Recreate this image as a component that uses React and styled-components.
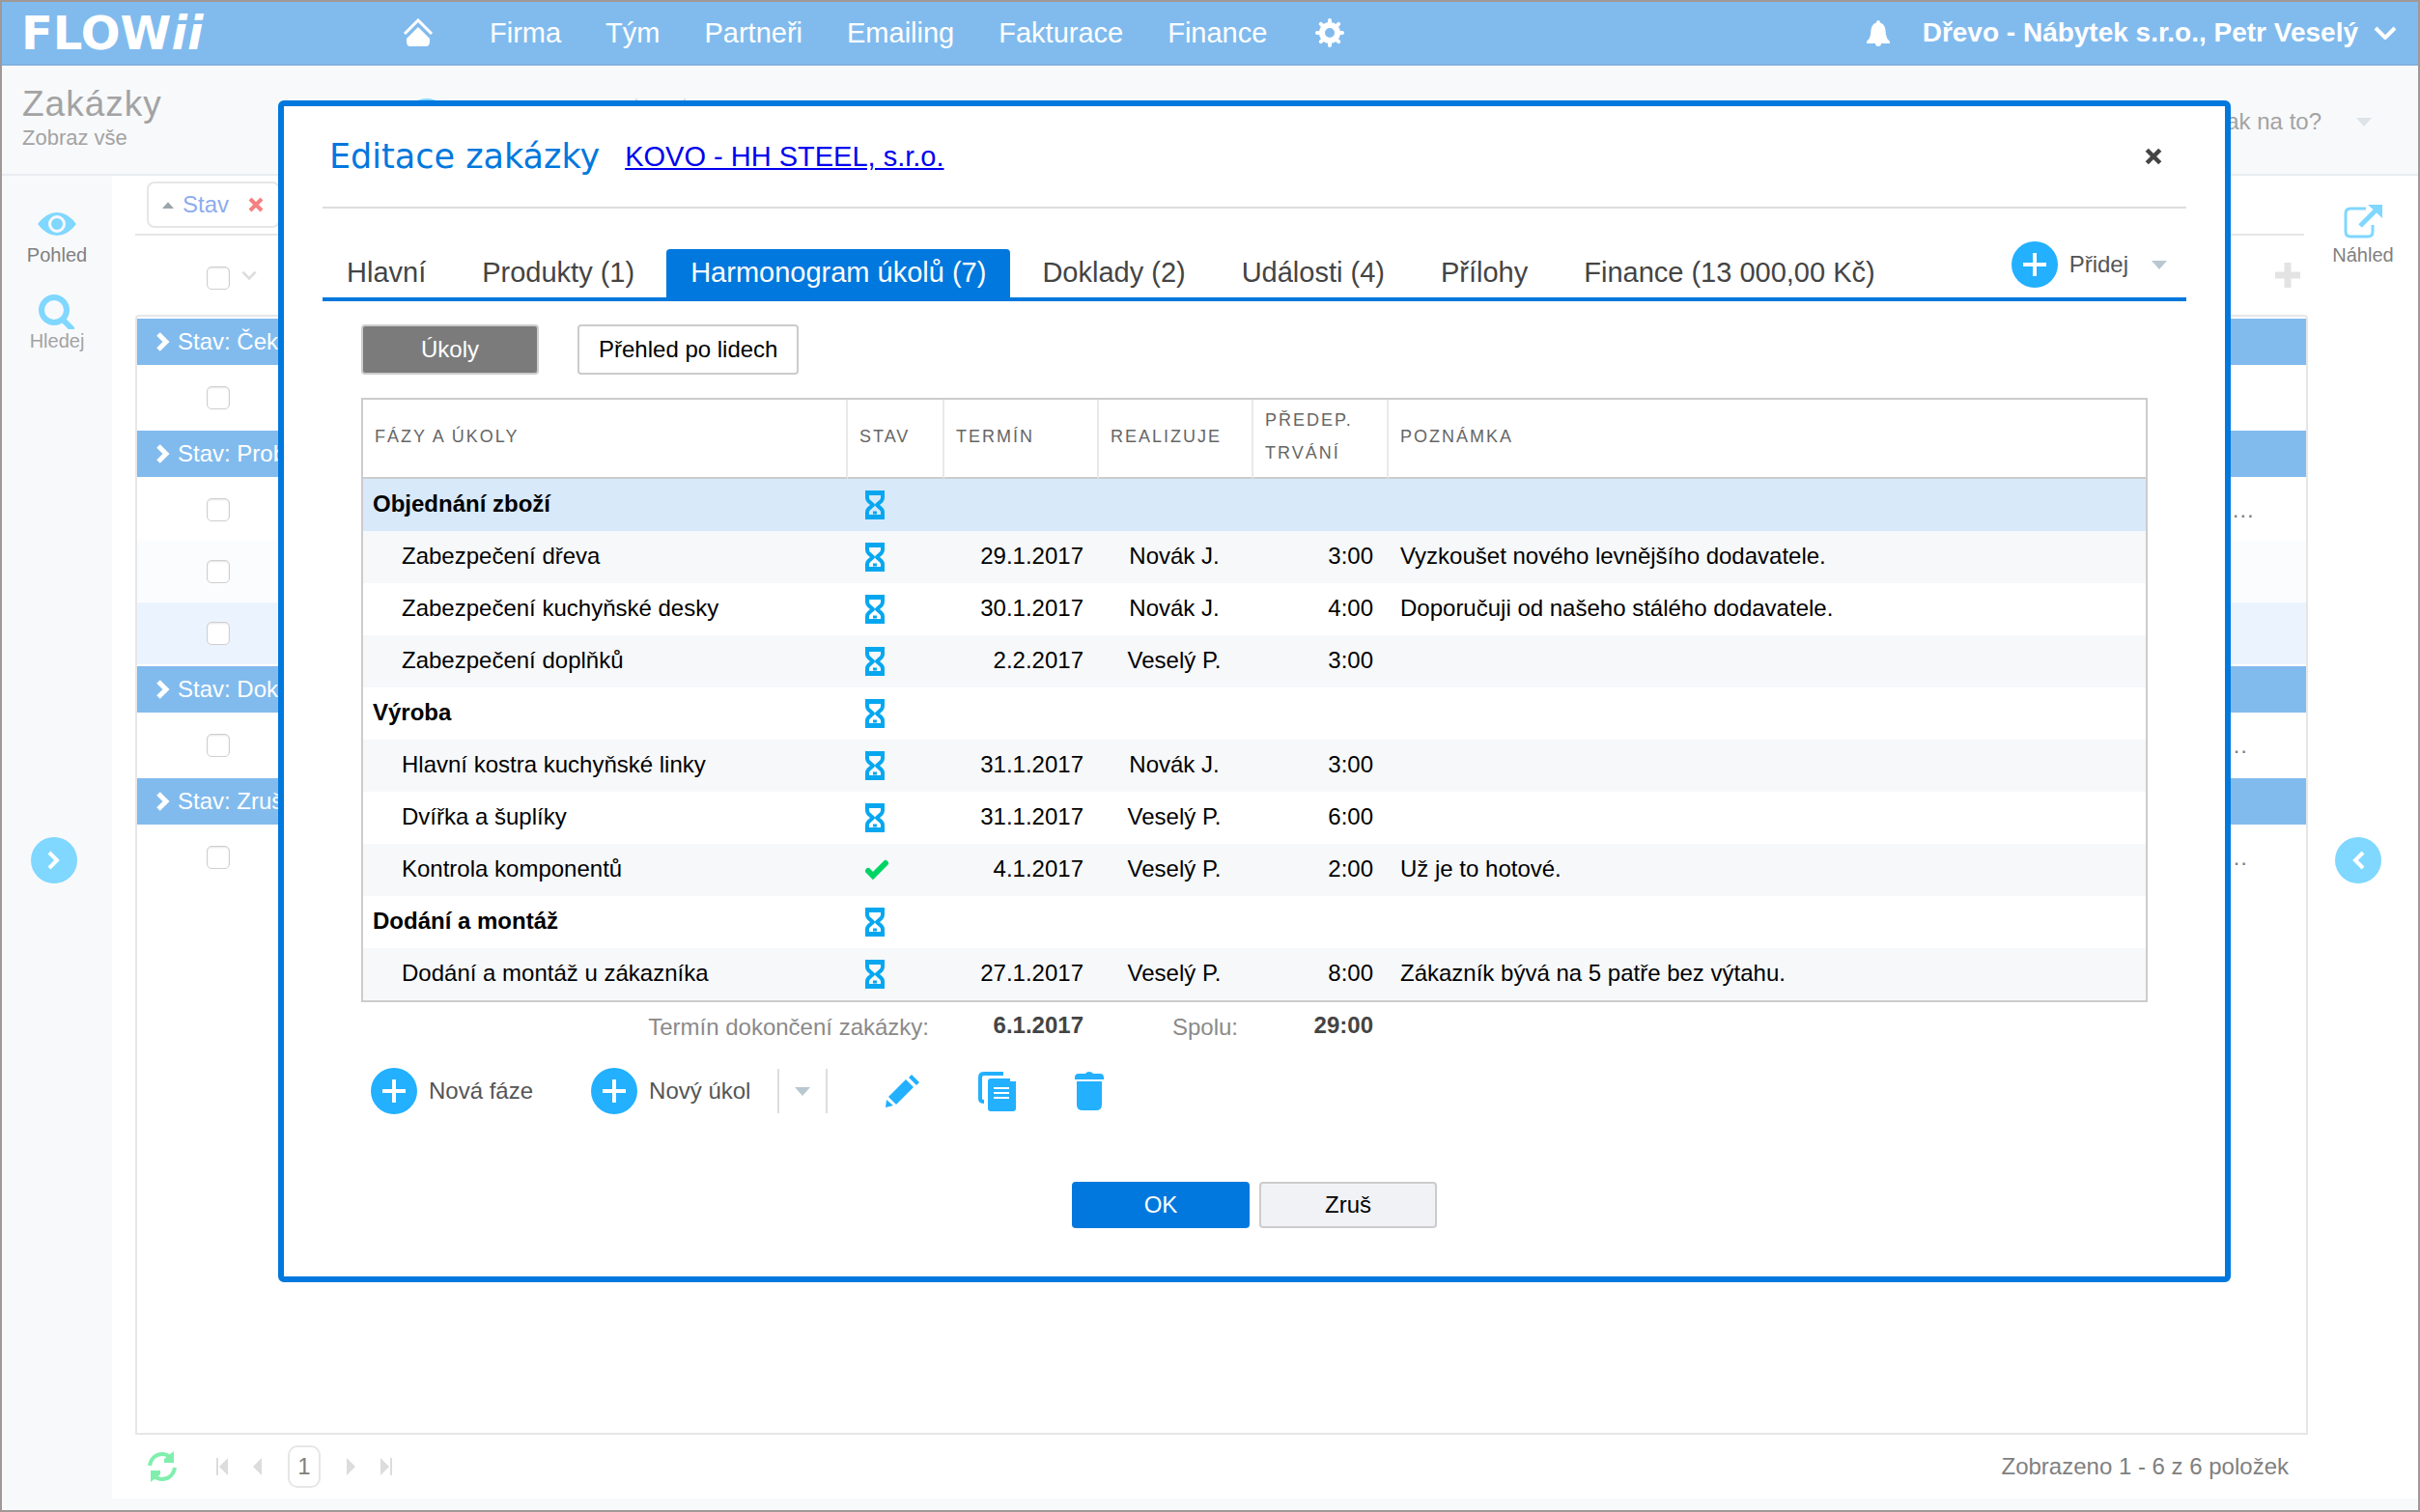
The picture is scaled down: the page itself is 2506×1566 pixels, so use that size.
import React from 'react'
import styled, { createGlobalStyle, css } from 'styled-components'

const navItems = ['Firma', 'Tým', 'Partneři', 'Emailing', 'Fakturace', 'Finance']

const tabs = [
  'Hlavní',
  'Produkty (1)',
  'Harmonogram úkolů (7)',
  'Doklady (2)',
  'Události (4)',
  'Přílohy',
  'Finance (13 000,00 Kč)'
]
const activeTab = 'Harmonogram úkolů (7)'

const groups = [
  { name: 'Stav: Čeká', rows: [{ id: 1 }] },
  { name: 'Stav: Probíhá', rows: [{ id: 2, note: '.…' }, { id: 3, shade: 'odd' }, { id: 4, shade: 'selected' }] },
  { name: 'Stav: Dokončená', rows: [{ id: 5, note: '…' }] },
  { name: 'Stav: Zrušená', rows: [{ id: 6, note: '…' }] }
]

const tasks = [
  { name: 'Objednání zboží', phase: true, selected: true },
  { name: 'Zabezpečení dřeva', date: '29.1.2017', person: 'Novák J.', time: '3:00', note: 'Vyzkoušet nového levnějšího dodavatele.' },
  { name: 'Zabezpečení kuchyňské desky', date: '30.1.2017', person: 'Novák J.', time: '4:00', note: 'Doporučuji od našeho stálého dodavatele.' },
  { name: 'Zabezpečení doplňků', date: '2.2.2017', person: 'Veselý P.', time: '3:00' },
  { name: 'Výroba', phase: true },
  { name: 'Hlavní kostra kuchyňské linky', date: '31.1.2017', person: 'Novák J.', time: '3:00' },
  { name: 'Dvířka a šuplíky', date: '31.1.2017', person: 'Veselý P.', time: '6:00' },
  { name: 'Kontrola komponentů', done: true, date: '4.1.2017', person: 'Veselý P.', time: '2:00', note: 'Už je to hotové.' },
  { name: 'Dodání a montáž', phase: true },
  { name: 'Dodání a montáž u zákazníka', date: '27.1.2017', person: 'Veselý P.', time: '8:00', note: 'Zákazník bývá na 5 patře bez výtahu.' }
]

// icons

const HomeIcon = () => (
  <svg width='32' height='30' viewBox='0 0 32 30' fill='#fff'>
    <path d='M2 16 16 2l14 14' fill='none' stroke='#fff' strokeWidth='3' />
    <path d='M16 9 28 21v3q0 5-4 5H8q-4 0-4-5v-3z' />
  </svg>
)

const GearIcon = () => (
  <svg width='30' height='30' viewBox='0 0 30 30' stroke='#fff' fill='none'>
    <circle cx='15' cy='15' r='8' strokeWidth='6' />
    {[0, 45, 90, 135].map(angle => (
      <path key={angle} d='M15 2v4M15 24v4' strokeWidth='4' strokeLinecap='round' transform={`rotate(${angle} 15 15)`} />
    ))}
  </svg>
)

const BellIcon = () => (
  <svg width='24' height='27' viewBox='0 0 24 27' fill='#fff'>
    <path d='M12 0q2 0 2 2.500C19 4 19.500 9 20 15q.5 4 4 7v2H0v-2q3.500-3 4-7C4.500 9 5 4 10 2.500Q10 0 12 0z' />
    <path d='M9 24h6q0 3-3 3t-3-3z' />
  </svg>
)

const Chevron = ({ width = 24, height = 14, color = '#fff', stroke = 4 }) => (
  <svg width={width} height={height} viewBox='0 0 24 14' fill='none' stroke={color} strokeWidth={stroke}>
    <path d='m2 2 10 10L22 2' />
  </svg>
)

const SideChevron = ({ left, height = 20, stroke = 5 }) => (
  <svg width='14' height={height} viewBox='0 0 14 20' fill='none' stroke='#fff' strokeWidth={stroke}>
    <path d={left ? 'M12 2 4 10l8 8' : 'm2 2 8 8-8 8'} />
  </svg>
)

const Caret = ({ color = '#b9c8d0', up }) => (
  <svg width={up ? 12 : 16} height={up ? 7 : 9} viewBox='0 0 16 9' fill={color}>
    <path d={up ? 'M0 9 8 0l8 9z' : 'M0 0h16L8 9z'} />
  </svg>
)

const Cross = ({ color, size }) => (
  <svg width={size} height={size} viewBox='0 0 16 16' fill='none' stroke={color} strokeWidth='4'>
    <path d='m2 2 12 12M14 2 2 14' />
  </svg>
)

const EyeIcon = () => (
  <svg width='40' height='40' viewBox='0 0 40 40' fill='#80d7ff'>
    <path d='M0 20Q9 8 20 8t20 12Q31 32 20 32T0 20z' />
    <circle cx='20' cy='20' r='7.500' stroke='#f8f9fb' strokeWidth='3' />
  </svg>
)

const SearchIcon = () => (
  <svg width='40' height='40' viewBox='0 0 40 40' fill='none' stroke='#80d7ff' strokeWidth='6'>
    <circle cx='17' cy='20' r='13' />
    <path d='m26 30 9 9' strokeLinecap='round' />
  </svg>
)

const OpenIcon = () => (
  <svg width='40' height='40' viewBox='0 0 40 40' fill='none' stroke='#80d7ff' strokeWidth='3'>
    <path d='M23 4H7Q2 4 2 9v19q0 5 5 5h18q5 0 5-5v-7' />
    <path d='M17 22 33 6' strokeWidth='5' />
    <path d='M25 0h15v14z' fill='#80d7ff' stroke='none' />
  </svg>
)

const PlusIcon = () => (
  <svg width='24' height='24' viewBox='0 0 24 24' stroke='#fff' strokeWidth='4'>
    <path d='M12 0v24M0 12h24' />
  </svg>
)

const AddColumnIcon = () => (
  <svg width='26' height='26' viewBox='0 0 26 26' stroke='#e3e3e3' strokeWidth='7'>
    <path d='M13 0v26M0 13h26' />
  </svg>
)

const RefreshIcon = () => (
  <svg width='32' height='34' viewBox='0 0 32 34' fill='#80efae'>
    {[0, 180].map(angle => (
      <g key={angle} transform={`rotate(${angle} 16 17)`}>
        <path d='M3 16C4 9 9 4 16 4q5 0 9 4' fill='none' stroke='#80efae' strokeWidth='4' />
        <path d='M28 1v12H18V9z' />
      </g>
    ))}
  </svg>
)

const PagerIcon = ({ back, end }) => (
  <svg width={end ? 12 : 10} height='18' viewBox={end ? '0 0 12 18' : '0 0 10 18'} fill='#dcdcdc'>
    {back && end && <path d='M0 0h2v18H0zM12 0v18L3 9z' />}
    {back && !end && <path d='M9 0v18L0 9z' />}
    {!back && end && <path d='M10 0h2v18h-2zM0 0v18l9-9z' />}
    {!back && !end && <path d='M1 0v18l9-9z' />}
  </svg>
)

const Hourglass = () => (
  <svg width='22' height='30' viewBox='0 0 22 30' fill='none' stroke='#07a7f0'>
    <path d='M3 3h16v4.500q0 2-1.500 3.500L13 15l4.500 4q1.500 1.500 1.500 3.500V27H3v-4.500q0-2 1.500-3.500L9 15l-4.500-4Q3 9.500 3 7.500z' strokeWidth='4' strokeLinejoin='round' />
    <path d='M1 2h20M1 28h20' strokeWidth='4' />
    <path d='M9 23h4' strokeWidth='3' />
  </svg>
)

const CheckIcon = () => (
  <svg width='26' height='22' viewBox='0 0 26 22' fill='none' stroke='#00d564' strokeWidth='6' strokeLinecap='round'>
    <path d='m4 12 5 5L22 4' />
  </svg>
)

const PencilIcon = () => (
  <svg width='36' height='34' viewBox='0 0 36 34' fill='#22b0ff'>
    <path d='M3 23 21 5l8 8-18 18z' />
    <path d='m24 3 3-3 8 8-3 3z' />
    <path d='m1 26 7 6-8 2z' />
  </svg>
)

const CopyIcon = () => (
  <svg width='40' height='41' viewBox='0 0 40 41' fill='#22b0ff'>
    <path d='M26 2H6Q2 2 2 6v22q0 3 4 3' fill='none' stroke='#22b0ff' strokeWidth='4' />
    <path d='M13 7h20v3h6v28q0 3-3 3H13q-3 0-3-3V10q0-3 3-3z' />
    <path d='M16 17h16M16 22h16M16 27h16' stroke='#fff' strokeWidth='2' />
  </svg>
)

const TrashIcon = () => (
  <svg width='30' height='40' viewBox='0 0 30 40' fill='#22b0ff'>
    <path d='M11 2q1-2 4-2t4 2h7q4 0 4 4v2H0V6q0-4 4-4z' />
    <path d='M2 10h26v24q0 6-6 6H8q-6 0-6-6z' />
  </svg>
)

const Header = () => (
  <StyledHeader>
    <Logo href='#'>FLOW<em>ii</em></Logo>
    <Nav>
      <a className='home' href='#' aria-label='Domů'><HomeIcon /></a>
      {navItems.map(item => <a key={item} href='#'>{item}</a>)}
      <a className='settings' href='#' aria-label='Nastavení'><GearIcon /></a>
    </Nav>
    <Account>
      <BellIcon />
      <button>
        Dřevo - Nábytek s.r.o., Petr Veselý
        <Chevron />
      </button>
    </Account>
  </StyledHeader>
)

const OrdersGrid = () => (
  <Main>
    <GroupBar>
      <GroupChip>
        <Caret up color='#9aa5aa' />
        Stav
        <Cross size={16} color='#f58080' />
      </GroupChip>
    </GroupBar>
    <GridHead>
      <Checkbox type='checkbox' aria-label='Vybrat vše' />
      <Chevron width={16} height={10} color='#dcdcdc' />
      <AddColumnIcon />
    </GridHead>
    <Grid>
      {groups.map(group => (
        <React.Fragment key={group.name}>
          <GroupRow><SideChevron />{group.name}</GroupRow>
          {group.rows.map(row => (
            <GridRow key={row.id} $shade={row.shade}>
              <Checkbox type='checkbox' aria-label={`Vybrat zakázku ${row.id}`} />
              <span>{row.note}</span>
            </GridRow>
          ))}
        </React.Fragment>
      ))}
    </Grid>
    <Pager>
      <button className='refresh' aria-label='Obnovit'><RefreshIcon /></button>
      <button aria-label='První'><PagerIcon back end /></button>
      <button aria-label='Předchozí'><PagerIcon back /></button>
      <button className='page'>1</button>
      <button aria-label='Další'><PagerIcon /></button>
      <button aria-label='Poslední'><PagerIcon end /></button>
      <p>Zobrazeno 1 - 6 z 6 položek</p>
    </Pager>
  </Main>
)

const TaskTable = () => (
  <StyledTable>
    <colgroup>
      <col className='name' />
      <col className='state' />
      <col className='date' />
      <col className='person' />
      <col className='time' />
      <col />
    </colgroup>
    <thead>
      <tr>
        <th>FÁZY A ÚKOLY</th>
        <th>STAV</th>
        <th>TERMÍN</th>
        <th>REALIZUJE</th>
        <th>PŘEDEP. TRVÁNÍ</th>
        <th>POZNÁMKA</th>
      </tr>
    </thead>
    <tbody>
      {tasks.map(task => (
        <TaskRow key={task.name} $phase={task.phase} $selected={task.selected}>
          <td className='name'>{task.name}</td>
          <td className='state'>{task.done ? <CheckIcon /> : <Hourglass />}</td>
          <td className='number'>{task.date}</td>
          <td className='person'>{task.person}</td>
          <td className='number'>{task.time}</td>
          <td>{task.note}</td>
        </TaskRow>
      ))}
    </tbody>
  </StyledTable>
)

const OrderDialog = () => (
  <Overlay>
    <Dialog role='dialog' aria-labelledby='dialog-title'>
      <DialogHead>
        <h2 id='dialog-title'>Editace zakázky</h2>
        <a href='#'>KOVO - HH STEEL, s.r.o.</a>
        <button aria-label='Zavřít'><Cross size={18} color='#444' /></button>
      </DialogHead>
      <TabBar>
        <div role='tablist'>
          {tabs.map(tab => (
            <Tab key={tab} role='tab' aria-selected={tab === activeTab} $active={tab === activeTab}>{tab}</Tab>
          ))}
        </div>
        <AddMenu>
          <RoundAction><i><PlusIcon /></i>Přidej</RoundAction>
          <button aria-label='Další možnosti'><Caret /></button>
        </AddMenu>
      </TabBar>
      <DialogBody>
        <ViewSwitch>
          <ViewButton $active>Úkoly</ViewButton>
          <ViewButton>Přehled po lidech</ViewButton>
        </ViewSwitch>
        <TaskTable />
        <Summary>
          <span>Termín dokončení zakázky:</span>
          <strong>6.1.2017</strong>
          <span>Spolu:</span>
          <strong>29:00</strong>
        </Summary>
        <Actions>
          <RoundAction><i><PlusIcon /></i>Nová fáze</RoundAction>
          <RoundAction className='task'><i><PlusIcon /></i>Nový úkol</RoundAction>
          <SplitButton aria-label='Další možnosti úkolu'><Caret /></SplitButton>
          <IconButton aria-label='Upravit'><PencilIcon /></IconButton>
          <IconButton aria-label='Kopírovat'><CopyIcon /></IconButton>
          <IconButton aria-label='Smazat'><TrashIcon /></IconButton>
        </Actions>
      </DialogBody>
      <DialogFoot>
        <FootButton $primary>OK</FootButton>
        <FootButton>Zruš</FootButton>
      </DialogFoot>
    </Dialog>
  </Overlay>
)

const App = () => (
  <Frame>
    <GlobalStyle />
    <Header />
    <SubHeader>
      <div>
        <h1>Zakázky</h1>
        <p>Zobraz vše</p>
      </div>
      <PageTools>
        <i />
        <SplitButton aria-label='Další' />
      </PageTools>
      <Help>
        Jak na to?
        <Caret color='#dde3e7' />
      </Help>
    </SubHeader>
    <Body>
      <Side $left>
        <div>
          <Tool><EyeIcon />Pohled</Tool>
          <Tool $dim><SearchIcon />Hledej</Tool>
        </div>
        <div>
          <Expander $left aria-label='Rozbalit'><SideChevron height={22} stroke={4} /></Expander>
        </div>
      </Side>
      <OrdersGrid />
      <Side>
        <div>
          <Tool><OpenIcon />Náhled</Tool>
        </div>
        <div>
          <Expander aria-label='Rozbalit náhled'><SideChevron left height={22} stroke={4} /></Expander>
        </div>
      </Side>
    </Body>
    <OrderDialog />
  </Frame>
)

export default App

const GlobalStyle = createGlobalStyle`
  * {
    box-sizing: border-box;
  }
  body {
    margin: 0;
    background-color: #fff;
    font-family: 'Liberation Sans', Arial, sans-serif;
    font-size: 24px;
    line-height: 28px;
  }
  h1, h2, p {
    margin: 0;
    font-weight: normal;
  }
  button {
    padding: 0;
    border: 0;
    background: none;
    color: inherit;
    font: inherit;
    cursor: pointer;
  }
  svg {
    display: block;
    flex: none;
  }
`

const Frame = styled.div`
  position: relative;
  display: flex;
  flex-direction: column;
  min-height: 100vh;
  border: 2px solid #9f9896;
`

const StyledHeader = styled.header`
  display: flex;
  align-items: center;
  height: 66px;
  padding: 0 22px 0 20px;
  border-bottom: 2px solid #7fb2e0;
  background-color: #81bbee;
  color: #fff;
  font-size: 28px;
`

const Logo = styled.a`
  width: 395px;
  color: #fff;
  font-family: 'DejaVu Sans', Verdana, sans-serif;
  font-size: 48px;
  font-weight: bold;
  line-height: 60px;
  text-decoration: none;
`

const Nav = styled.nav`
  display: flex;
  align-items: center;
  gap: 46px;
  font-size: 29px;

  a {
    color: #fff;
    text-decoration: none;
  }
  .home {
    margin-right: 12px;
  }
  .settings {
    margin-left: 4px;
  }
`

const Account = styled.div`
  display: flex;
  align-items: center;
  gap: 34px;
  margin-left: auto;

  button {
    display: flex;
    align-items: center;
    gap: 16px;
    font-weight: bold;
  }
`

const SubHeader = styled.div`
  display: flex;
  height: 114px;
  padding: 17px 48px 0 21px;
  border-bottom: 2px solid #e8ecf0;
  background-color: #f8f9fb;
  color: #a3a3a3;

  > div:first-child {
    width: 395px;
  }
  h1 {
    font-size: 37px;
    letter-spacing: 1px;
    line-height: 45px;
  }
  p {
    font-size: 22px;
    line-height: 26px;
  }
`

const PageTools = styled.div`
  display: flex;
  gap: 192px;
  padding-top: 17px;

  i {
    width: 48px;
    height: 48px;
    border-radius: 50%;
    background-color: #80d7ff;
  }
`

const Help = styled.button`
  display: flex;
  align-items: center;
  gap: 36px;
  height: 48px;
  margin: 17px 0 0 auto;
`

const Body = styled.div`
  flex: 1;
  display: flex;
  padding-bottom: 12px;
  background-color: #f8f9fb;
`

const Side = styled.aside`
  display: flex;
  flex-direction: column;
  width: 114px;
  background-color: ${({ $left }) => ($left ? '#f8f9fb' : '#fff')};

  > div {
    flex: 1 1 0;
    display: flex;
    flex-direction: column;
    align-items: center;
    gap: 25px;
  }
`

const Tool = styled.button`
  display: flex;
  flex-direction: column;
  align-items: center;
  color: ${({ $dim }) => ($dim ? '#a3a3a3' : '#808080')};
  font-size: 20px;
  line-height: 24px;

  &:first-child {
    margin-top: 30px;
  }
`

const Expander = styled.button`
  display: flex;
  align-items: center;
  justify-content: center;
  width: 48px;
  height: 48px;
  margin-right: ${({ $left }) => ($left ? 6 : 10)}px;
  border-radius: 50%;
  background-color: #80d7ff;
`

const Main = styled.main`
  flex: 1;
  display: flex;
  flex-direction: column;
  min-width: 0;
  padding-left: 24px;
  background-color: #fff;
`

const GroupBar = styled.div`
  height: 62px;
  margin-right: 4px;
  padding: 6px 12px;
  border-bottom: 2px solid #e6e6e6;
`

const GroupChip = styled.button`
  display: flex;
  align-items: center;
  width: 138px;
  height: 48px;
  padding: 0 14px;
  border: 2px solid #e6e6e6;
  border-radius: 8px;
  color: #8eabee;

  svg:first-child {
    margin-right: 9px;
  }
  svg:last-child {
    margin-left: 20px;
  }
`

const Checkbox = styled.input`
  appearance: none;
  width: 24px;
  height: 24px;
  margin: 0;
  border: 1px solid #cfcfcf;
  border-radius: 5px;
  background-color: #fff;
  box-shadow: inset 0 1px 2px #e4e4e4;
`

const GridHead = styled.div`
  display: flex;
  align-items: center;
  gap: 12px;
  height: 82px;
  padding: 0 8px 0 74px;

  ${Checkbox} {
    margin-top: 6px;
  }
  svg:last-child {
    margin-left: auto;
  }
`

const Grid = styled.div`
  flex: 1;
  padding-top: 2px;
  border: 2px solid #e6e6e6;
  border-radius: 4px 4px 0 0;
`

const GroupRow = styled.div`
  display: flex;
  align-items: center;
  gap: 8px;
  height: 48px;
  margin: 2px 0;
  padding-left: 20px;
  background-color: #81bbee;
  color: #fff;

  &:first-child {
    margin-top: 0;
  }
`

const shades = {
  odd: '#fbfcfe',
  selected: '#ebf4fe'
}

const GridRow = styled.div`
  display: flex;
  align-items: center;
  justify-content: space-between;
  height: 64px;
  padding-left: 72px;
  background-color: ${({ $shade }) => shades[$shade] || '#fff'};
  color: #808080;

  span {
    width: 84px;
  }
`

const Pager = styled.div`
  display: flex;
  align-items: center;
  gap: 26px;
  height: 66px;
  padding: 0 20px 0 12px;
  color: #808080;

  .refresh {
    margin-right: 14px;
  }
  .page {
    width: 34px;
    height: 44px;
    border: 2px solid #e6e6e6;
    border-radius: 10px;
  }
  p {
    margin-left: auto;
  }
`

const Overlay = styled.div`
  position: absolute;
  inset: 0;
  padding: 102px 194px 0 286px;
`

const Dialog = styled.section`
  padding: 0 40px 50px;
  border: 6px solid #0078dd;
  border-radius: 6px;
  background-color: #fff;
`

const DialogHead = styled.div`
  display: flex;
  align-items: center;
  height: 106px;
  padding: 0 25px 0 7px;
  border-bottom: 2px solid #ddd;

  h2 {
    margin-right: 26px;
    color: #0078dd;
    font-family: 'DejaVu Sans', Verdana, sans-serif;
    font-size: 35px;
    line-height: 44px;
  }
  a {
    color: #00e;
    font-size: 29px;
  }
  button {
    margin-left: auto;
  }
`

const TabBar = styled.div`
  display: flex;
  align-items: flex-end;
  justify-content: space-between;
  height: 96px;
  border-bottom: 4px solid #0078dd;

  > div {
    display: flex;
    gap: 8px;
  }
`

const Tab = styled.button`
  height: 50px;
  padding: 0 25px 2px;
  border-radius: 4px 4px 0 0;
  color: #444;
  font-size: 29px;

  ${({ $active }) => $active && css`
    background-color: #0078dd;
    color: #fff;
  `}
`

const RoundAction = styled.button`
  display: flex;
  align-items: center;
  gap: 12px;
  color: #555;

  i {
    display: flex;
    align-items: center;
    justify-content: center;
    width: 48px;
    height: 48px;
    border-radius: 50%;
    background-color: #22b0ff;
  }
`

const AddMenu = styled.div`
  align-items: center;
  padding: 0 20px 10px 0;

  button:last-child {
    margin-left: 16px;
  }
`

const DialogBody = styled.div`
  padding: 24px 40px 0;
`

const ViewSwitch = styled.div`
  display: flex;
  gap: 40px;
  margin-bottom: 24px;
`

const ViewButton = styled.button`
  min-width: 184px;
  height: 52px;
  padding: 0 20px;
  border: 2px solid #ccc;
  border-radius: 4px;
  background-color: ${({ $active }) => ($active ? '#7b7b7b' : '#fff')};
  color: ${({ $active }) => ($active ? '#fff' : '#000')};
`

const StyledTable = styled.table`
  width: 100%;
  table-layout: fixed;
  border: 2px solid #ccc;
  border-spacing: 0;

  col.name {
    width: 502px;
  }
  col.state {
    width: 100px;
  }
  col.date, col.person {
    width: 160px;
  }
  col.time {
    width: 140px;
  }

  th {
    height: 82px;
    padding: 0 12px 4px;
    border-right: 2px solid #e9e9e9;
    border-bottom: 2px solid #ccc;
    color: #666;
    font-size: 18px;
    font-weight: normal;
    letter-spacing: 2px;
    line-height: 34px;
    text-align: left;
  }
  th:last-child {
    border-right: 0;
  }

  tbody tr:nth-child(even) {
    background-color: #f6f8fa;
  }
  td {
    height: 54px;
    padding: 0 12px 2px;
  }
  td.state {
    padding: 0 0 0 17px;
  }
  td.number {
    padding-right: 16px;
    text-align: right;
  }
  td.person {
    padding-right: 16px;
    text-align: center;
  }
`

const TaskRow = styled.tr`
  background-color: ${({ $selected }) => ($selected ? '#d8e9fa' : 'transparent')};

  td.name {
    padding-left: ${({ $phase }) => ($phase ? 10 : 40)}px;
    font-weight: ${({ $phase }) => ($phase ? 'bold' : 'normal')};
  }
`

const Summary = styled.div`
  display: grid;
  grid-template-columns: 588px 160px 160px 140px;
  height: 38px;
  padding-top: 10px;
  color: #8a8a8a;
  text-align: right;

  span {
    padding-top: 2px;
  }
  strong {
    color: #444;
  }
`

const Actions = styled.div`
  display: flex;
  align-items: center;
  height: 48px;
  margin-top: 30px;
  padding-left: 10px;

  .task {
    margin: 0 28px 0 60px;
  }
`

const SplitButton = styled.button`
  display: flex;
  align-items: center;
  justify-content: center;
  width: 52px;
  height: 46px;
  border: 2px solid #ddd;
  border-width: 0 2px;
`

const IconButton = styled.button`
  margin-left: 60px;
`

const DialogFoot = styled.div`
  display: flex;
  justify-content: center;
  gap: 10px;
  margin-top: 70px;
`

const FootButton = styled.button`
  width: 184px;
  height: 48px;
  border: 2px solid ${({ $primary }) => ($primary ? '#0078dd' : '#ccc')};
  border-radius: 4px;
  background-color: ${({ $primary }) => ($primary ? '#0078dd' : '#f1f2f6')};
  color: ${({ $primary }) => ($primary ? '#fff' : '#000')};
`
